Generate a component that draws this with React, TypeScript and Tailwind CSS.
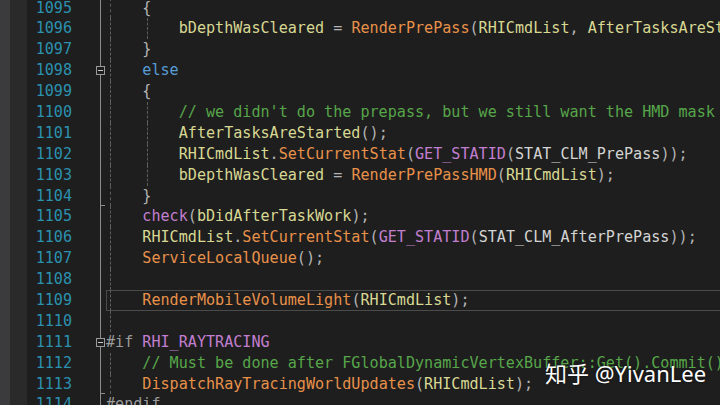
import React from 'react';

type Tok = [string, string];

interface Line {
    n: number;
    toks: Tok[];
    guides?: number[];
    fold?: boolean;
    tick?: boolean;
    current?: boolean;
}

const colors: Record<string, string> = {
    p: 'text-[#b4b4b4]',
    k: 'text-[#569cd6]',
    v: 'text-[#d8d893]',
    f: 'text-[#e8914a]',
    m: 'text-[#c27fd0]',
    c: 'text-[#57a64a]',
    e: 'text-[#d4d4d4]',
    h: 'text-[#9b9b9b]',
};

const I4 = '    ';
const I8 = '        ';

const lines: Line[] = [
    { n: 1095, guides: [4], toks: [['p', I4 + '{']] },
    { n: 1096, guides: [4, 41], toks: [['p', I8], ['v', 'bDepthWasCleared'], ['p', ' = '], ['f', 'RenderPrePass'], ['p', '('], ['v', 'RHICmdList'], ['p', ', '], ['v', 'AfterTasksAreStarted'], ['p', ');']] },
    { n: 1097, guides: [4], toks: [['p', I4 + '}']] },
    { n: 1098, guides: [4], fold: true, toks: [['p', I4], ['k', 'else']] },
    { n: 1099, guides: [4], toks: [['p', I4 + '{']] },
    { n: 1100, guides: [4, 41], toks: [['p', I8], ['c', "// we didn't do the prepass, but we still want the HMD mask if there is one"]] },
    { n: 1101, guides: [4, 41], toks: [['p', I8], ['v', 'AfterTasksAreStarted'], ['p', '();']] },
    { n: 1102, guides: [4, 41], toks: [['p', I8], ['v', 'RHICmdList'], ['p', '.'], ['f', 'SetCurrentStat'], ['p', '('], ['m', 'GET_STATID'], ['p', '('], ['e', 'STAT_CLM_PrePass'], ['p', '));']] },
    { n: 1103, guides: [4, 41], toks: [['p', I8], ['v', 'bDepthWasCleared'], ['p', ' = '], ['f', 'RenderPrePassHMD'], ['p', '('], ['v', 'RHICmdList'], ['p', ');']] },
    { n: 1104, guides: [4], tick: true, toks: [['p', I4 + '}']] },
    { n: 1105, guides: [4], toks: [['p', I4], ['m', 'check'], ['p', '('], ['v', 'bDidAfterTaskWork'], ['p', ');']] },
    { n: 1106, guides: [4], toks: [['p', I4], ['v', 'RHICmdList'], ['p', '.'], ['f', 'SetCurrentStat'], ['p', '('], ['m', 'GET_STATID'], ['p', '('], ['e', 'STAT_CLM_AfterPrePass'], ['p', '));']] },
    { n: 1107, guides: [4], toks: [['p', I4], ['f', 'ServiceLocalQueue'], ['p', '();']] },
    { n: 1108, guides: [4], toks: [] },
    { n: 1109, guides: [4], current: true, toks: [['p', I4], ['f', 'RenderMobileVolumeLight'], ['p', '('], ['v', 'RHICmdList'], ['p', ');']] },
    { n: 1110, guides: [4], toks: [] },
    { n: 1111, fold: true, toks: [['h', '#if '], ['m', 'RHI_RAYTRACING']] },
    { n: 1112, guides: [4], toks: [['p', I4], ['c', '// Must be done after FGlobalDynamicVertexBuffer::Get().Commit() for dynamic geometry']] },
    { n: 1113, guides: [4], tick: true, toks: [['p', I4], ['f', 'DispatchRayTracingWorldUpdates'], ['p', '('], ['v', 'RHICmdList'], ['p', ');']] },
    { n: 1114, toks: [['h', '#endif']] },
];

const Row: React.FC<{ line: Line }> = ({ line }) => (
    <div className="flex h-[20.9px] leading-[20.9px]">
        <div className="w-[10px] shrink-0 bg-[#3b3b3e]" />
        <div className="w-[17px] shrink-0 bg-[#2a2a2b]" />
        <div className="w-[45px] shrink-0 text-right text-[#2b91af]">{line.n}</div>
        <div className="relative w-[34px] shrink-0">
            <div className="absolute left-[28px] top-0 bottom-0 w-px bg-[#8c8c8c]" />
            {line.tick && <div className="absolute left-[28px] bottom-0 h-px w-[5px] bg-[#8c8c8c]" />}
            {line.fold && (
                <div className="absolute left-[24px] top-[6px] flex h-[9px] w-[9px] items-center justify-center border border-[#9a9a9a] bg-[#1e1e1e]">
                    <div className="h-px w-[5px] bg-[#c8c8c8]" />
                </div>
            )}
        </div>
        <div className="relative min-w-0 flex-1 overflow-hidden whitespace-pre">
            {line.current && <div className="absolute inset-0 border border-r-0 border-[#4b4b4b]" />}
            {line.guides?.map(g => (
                <div key={g} className="absolute top-0 bottom-0 border-l border-dashed border-[#5c5c5c]" style={{ left: g }} />
            ))}
            <span className="relative">
                {line.toks.map((t, i) => (
                    <span key={i} className={colors[t[0]]}>{t[1]}</span>
                ))}
            </span>
        </div>
    </div>
);

export default function App() {
    return (
        <div className="relative h-[405px] w-[720px] overflow-hidden bg-[#1e1e1e] font-['DejaVu_Sans_Mono',monospace] text-[15.1px]">
            <div className="-mt-[2.5px] flex flex-col">
                {lines.map(l => <Row key={l.n} line={l} />)}
            </div>
            <div className="absolute left-[545px] top-[358px] font-['Noto_Sans','Noto_Sans_CJK_SC',sans-serif] text-[22px] leading-[30px] text-white [text-shadow:0_0_3px_rgba(0,0,0,0.6)]">
                知乎 @YivanLee
            </div>
        </div>
    );
}
